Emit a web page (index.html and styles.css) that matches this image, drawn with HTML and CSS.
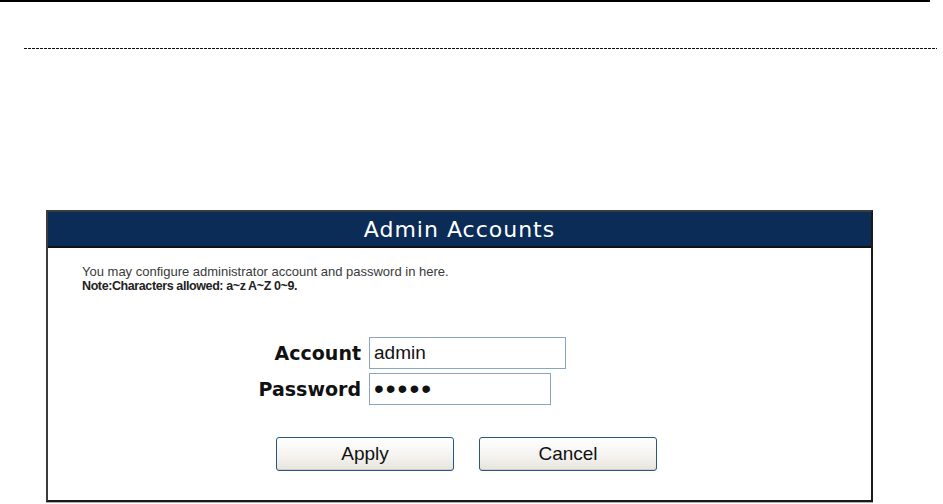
FILE: index.html
```html
<!DOCTYPE html>
<html lang="en">
<head>
<meta charset="utf-8">
<title>Admin Accounts</title>
<link rel="stylesheet" href="styles.css">
</head>
<body>
<div class="topbar"></div>
<div class="rule"></div>
<section class="panel">
  <h1 class="panel-title">Admin Accounts</h1>
  <div class="panel-body">
    <div class="intro">
      <p class="intro-line">You may configure administrator account and password in here.</p>
      <p class="intro-line note">Note:Characters allowed: a~z A~Z 0~9.</p>
    </div>
    <form class="fields">
      <label class="field-label" for="acc">Account</label>
      <input class="field-input wide" id="acc" type="text" value="admin">
      <label class="field-label" for="pwd">Password</label>
      <input class="field-input narrow pwd" id="pwd" type="password" value="admin">
    </form>
    <div class="actions">
      <button class="btn" type="button">Apply</button>
      <button class="btn" type="button">Cancel</button>
    </div>
  </div>
</section>
</body>
</html>
```

FILE: styles.css
```css
html, body {
  margin: 0;
  padding: 0;
  background: #fff;
}
body {
  width: 943px;
  height: 504px;
  overflow: hidden;
  font-family: "Liberation Sans", Arial, sans-serif;
}
.topbar {
  height: 2px;
  margin-right: 13px;
  background: #000;
}
.rule {
  height: 1px;
  margin: 46px 6px 0 24px;
  background: repeating-linear-gradient(to right, #111 0 3px, transparent 3px 4px);
}
.panel {
  box-sizing: border-box;
  width: 827px;
  margin: 161px 0 0 46px;
  border: 2px solid #3c3c3c;
  border-bottom-color: #1a1a1a;
  border-right-color: #1a1a1a;
  box-shadow: 0 1px 0 #b0b0b0;
}
.panel-title {
  margin: 0;
  height: 34px;
  line-height: 35px;
  background: #0a2c57;
  border-bottom: 2px solid #111;
  color: #fff;
  text-align: center;
  font-family: "DejaVu Sans", Verdana, sans-serif;
  font-weight: normal;
  font-size: 22px;
  letter-spacing: 1px;
}
.panel-body {
  padding: 16px 0 29px 34px;
}
.intro-line {
  margin: 0;
  height: 15px;
  font-size: 13px;
  line-height: 15px;
  color: #3a3a3a;
}
.note {
  color: #222;
  font-weight: bold;
  font-size: 12.5px;
  letter-spacing: -0.4px;
}
.fields {
  display: grid;
  grid-template-columns: 279px auto;
  column-gap: 8px;
  row-gap: 4px;
  margin-top: 43px;
  align-items: center;
}
.field-label {
  text-align: right;
  font-family: "DejaVu Sans", Verdana, sans-serif;
  font-weight: bold;
  font-size: 19px;
  color: #111;
}
.field-input {
  box-sizing: border-box;
  height: 32px;
  margin: 0;
  padding: 0 4px;
  border: 1px solid #8aa4c4;
  font-family: "Liberation Sans", Arial, sans-serif;
  font-size: 19px;
  color: #111;
  background: #fff;
  outline: none;
}
.wide { width: 197px; }
.narrow { width: 182px; }
.pwd {
  font-size: 28px;
  letter-spacing: 2px;
}
.actions {
  display: flex;
  gap: 25px;
  margin-top: 32px;
  padding-left: 194px;
}
.btn {
  box-sizing: border-box;
  width: 178px;
  height: 34px;
  margin: 0;
  border: 1px solid #2a5685;
  border-radius: 3px;
  background: linear-gradient(#ffffff, #f3f2ee 60%, #e6e4dc);
  box-shadow: inset 0 -1px 0 #cfcdc5;
  font-family: "Liberation Sans", Arial, sans-serif;
  font-size: 19px;
  color: #111;
  padding: 0;
}
```
